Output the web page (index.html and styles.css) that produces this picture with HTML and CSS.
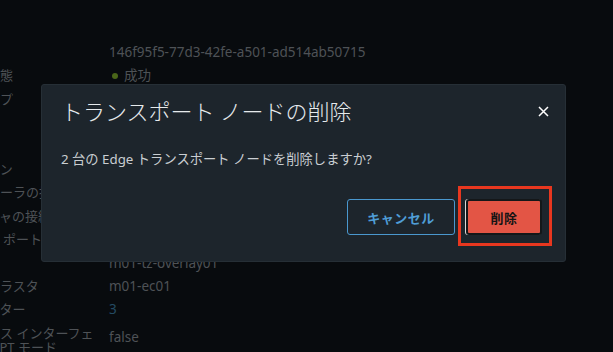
FILE: index.html
```html
<!DOCTYPE html>
<html lang="ja">
<head>
<meta charset="utf-8">
<title>トランスポート ノードの削除</title>
<link rel="stylesheet" href="styles.css">
</head>
<body>
<main class="details">
  <div class="row"><span class="label"></span><span class="value">146f95f5-77d3-42fe-a501-ad514ab50715</span></div>
  <div class="row"><span class="label">構成の状態</span><span class="value"><i class="dot"></i>成功</span></div>
  <div class="row"><span class="label">展開タイプ</span><span class="value"></span></div>
  <div class="row"><span class="label"></span><span class="value"></span></div>
  <div class="row"><span class="label"></span><span class="value"></span></div>
  <div class="row"><span class="label">バージョン</span><span class="value"></span></div>
  <div class="row"><span class="label">コントローラの接続</span><span class="value"></span></div>
  <div class="row"><span class="label">マネージャの接続</span><span class="value"></span></div>
  <div class="row"><span class="label">トンネル ポート</span><span class="value"></span></div>
  <div class="row"><span class="label"></span><span class="value">m01-tz-overlay01</span></div>
  <div class="row"><span class="label">エッジクラスタ</span><span class="value">m01-ec01</span></div>
  <div class="row"><span class="label">パラメーター</span><span class="value link">3</span></div>
  <div class="row"><span class="label wrap">データパス インターフェ<br>イスの UPT モード</span><span class="value">false</span></div>
</main>

<section class="modal" role="dialog" aria-label="トランスポート ノードの削除">
  <header class="modal-header">
    <h1 class="modal-title">トランスポート ノードの削除</h1>
    <button class="close" aria-label="閉じる">
      <svg width="11" height="11" viewBox="0 0 11 11"><path d="M1 1 L10 10 M10 1 L1 10" stroke="#ffffff" stroke-width="1.5" fill="none"/></svg>
    </button>
  </header>
  <p class="modal-body">2 台の Edge トランスポート ノードを削除しますか?</p>
  <footer class="modal-footer">
    <button class="btn btn-outline">キャンセル</button>
    <span class="highlight-wrap">
      <button class="btn btn-danger">削除</button>
      <span class="highlight"></span>
    </span>
  </footer>
</section>
</body>
</html>
```

FILE: styles.css
```css
html, body {
  margin: 0;
  padding: 0;
  width: 613px;
  height: 352px;
  overflow: hidden;
  background: #080b0e;
  font-family: "Noto Sans", "Noto Sans CJK JP", sans-serif;
}

.details {
  margin-left: -52px;
  padding-top: 41px;
  display: grid;
  grid-auto-rows: 23.4px;
}

.row {
  display: grid;
  grid-template-columns: 150px 1fr;
  column-gap: 11px;
  align-items: center;
  color: #4e5256;
  font-size: 13px;
  white-space: nowrap;
}

.label {
  line-height: 23.4px;
}

.label.wrap {
  line-height: 14px;
  align-self: start;
  padding-top: 4px;
}

.value {
  font-size: 13.5px;
  line-height: 23.4px;
  display: flex;
  align-items: center;
  gap: 6px;
}

.value.link {
  color: #244b63;
}

.dot {
  width: 6px;
  height: 6px;
  border-radius: 50%;
  background: #4a6619;
  margin-left: 3px;
}

.modal {
  position: absolute;
  left: 41px;
  top: 84px;
  width: 525px;
  height: 178px;
  box-sizing: border-box;
  background: #1d252c;
  border: 1px solid #262f36;
  border-radius: 3px;
  display: flex;
  flex-direction: column;
}

.modal-header {
  display: flex;
  align-items: center;
  justify-content: space-between;
  padding: 12px 16px 0 19px;
}

.modal-title {
  margin: 0;
  font-family: "Noto Sans CJK JP", sans-serif;
  font-size: 22px;
  font-weight: 300;
  line-height: 26px;
  color: #e6eaec;
}

.close {
  background: none;
  border: 0;
  padding: 0;
  width: 11px;
  height: 11px;
  display: flex;
  margin-top: 2px;
}

.modal-body {
  margin: 27px 0 0 19px;
  font-size: 13.3px;
  line-height: 18px;
  color: #c9ced2;
}

.modal-footer {
  display: flex;
  justify-content: flex-end;
  gap: 11px;
  padding-right: 23px;
  margin-top: 31px;
}

.btn {
  height: 36px;
  box-sizing: border-box;
  border-radius: 3px;
  font-family: "Noto Sans CJK JP", sans-serif;
  font-size: 13px;
  font-weight: 700;
  letter-spacing: 0.5px;
  padding: 0;
}

.btn-outline {
  width: 108px;
  background: transparent;
  border: 1px solid #4a98cf;
  color: #4f9dd6;
}

.highlight-wrap {
  position: relative;
  display: flex;
}

.btn-danger {
  width: 76px;
  background: #e35545;
  border: 2px solid #141719;
  box-shadow: -1px 0 0 #d8d8d8;
  color: #141414;
}

.highlight {
  position: absolute;
  left: -8px;
  right: -10px;
  top: -13px;
  bottom: -11px;
  border: 3px solid #e8371f;
  pointer-events: none;
}
```
